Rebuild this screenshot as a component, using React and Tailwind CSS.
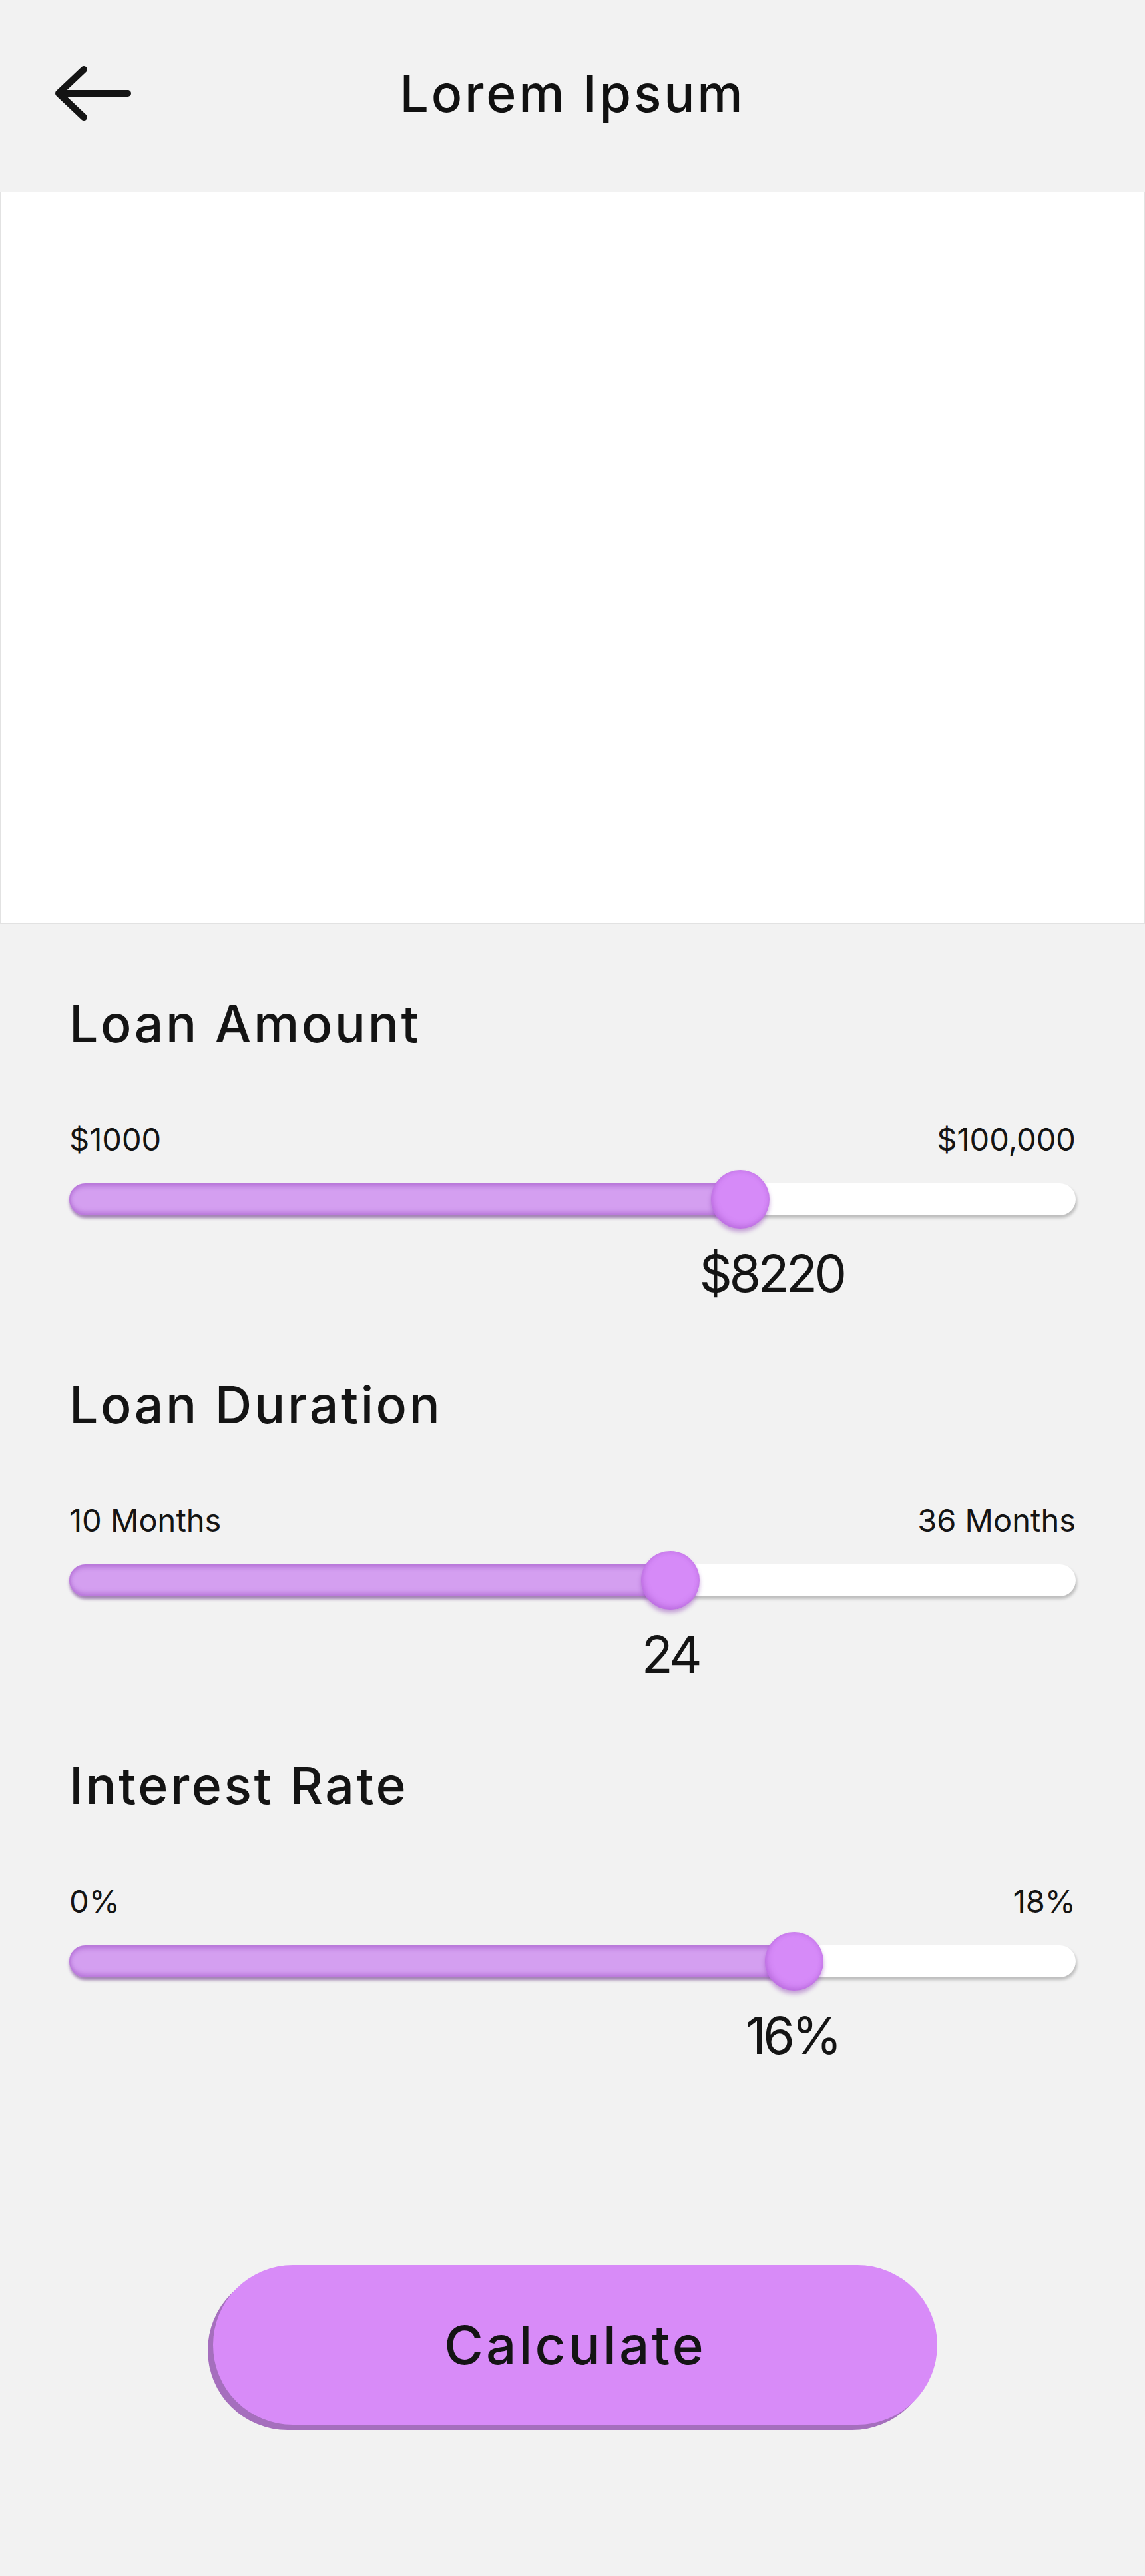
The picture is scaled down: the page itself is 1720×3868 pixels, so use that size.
import React from "react";

function Slider({ title, min, max, value, thumb, valueCenter }) {
  return (
    <section className="pt-[117px] first:pt-[110px]">
      <h2 className="text-[77px] leading-[80px] font-medium text-[#141414] tracking-[3.5px]">{title}</h2>
      <div className="mt-[110px] flex justify-between text-[47px] leading-[48px] text-[#141414]">
        <span>{min}</span>
        <span>{max}</span>
      </div>
      <div className="relative mt-[22px] h-[88px] w-[1512px]">
        <div className="absolute left-0 right-0 top-[20px] h-[48px] rounded-full bg-white shadow-[2px_4px_4px_rgba(0,0,0,0.22)]" />
        <div
          className="absolute left-0 top-[20px] h-[48px] rounded-full bg-[#d49ff0] shadow-[inset_0_5px_6px_rgba(150,70,190,0.45),inset_0_-5px_6px_rgba(150,70,190,0.45),0_4px_4px_rgba(130,60,170,0.45)]"
          style={{ width: thumb + 20 }}
        />
        <div
          className="absolute top-0 h-[88px] w-[88px] -translate-x-1/2 rounded-full bg-[#d68af8] shadow-[inset_3px_-4px_8px_rgba(140,60,180,0.35),inset_-2px_2px_6px_rgba(140,60,180,0.15),0_5px_6px_rgba(140,60,180,0.45)]"
          style={{ left: thumb }}
        />
      </div>
      <div className="relative mt-[27px] h-[80px]">
        <span
          className="absolute top-0 -translate-x-1/2 whitespace-nowrap text-[77px] leading-[80px] text-[#141414] tracking-[-4.5px]"
          style={{ left: valueCenter }}
        >
          {value}
        </span>
      </div>
    </section>
  );
}

export default function App() {
  return (
    <div
      className="min-h-[3868px] w-[1720px] bg-[#f2f2f2]"
      style={{ fontFamily: "Inter, 'Noto Sans', sans-serif" }}
    >
      <header className="grid h-[288px] grid-cols-[1fr_auto_1fr] items-center pb-[8px]">
        <div className="pl-[80px]">
          <svg width="120" height="90" viewBox="0 0 120 90" fill="none">
            <path
              d="M46 9 L8 45 L46 81 M8 45 L112 45"
              stroke="#141414"
              strokeWidth="10"
              strokeLinecap="round"
              strokeLinejoin="round"
            />
          </svg>
        </div>
        <h1 className="text-[77px] leading-[80px] font-medium text-[#111111] tracking-[3.8px]">Lorem Ipsum</h1>
        <div />
      </header>
      <div className="h-[1099px] w-full border border-[#e2e2e2] bg-white" />
      <main className="px-[104px]">
        <Slider title="Loan Amount" min="$1000" max="$100,000" value="$8220" thumb={1008} valueCenter={1055} />
        <Slider title="Loan Duration" min="10 Months" max="36 Months" value="24" thumb={903} valueCenter={903} />
        <Slider title="Interest Rate" min="0%" max="18%" value="16%" thumb={1089} valueCenter={1086} />
      </main>
      <div className="flex justify-center pt-[305px] pl-[8px]">
        <button className="flex h-[240px] w-[1088px] items-center justify-center rounded-full bg-[#d88bf8] text-[80px] font-medium text-[#141414] tracking-[4px] shadow-[-8px_8px_0_#a56fbd]">
          Calculate
        </button>
      </div>
    </div>
  );
}
